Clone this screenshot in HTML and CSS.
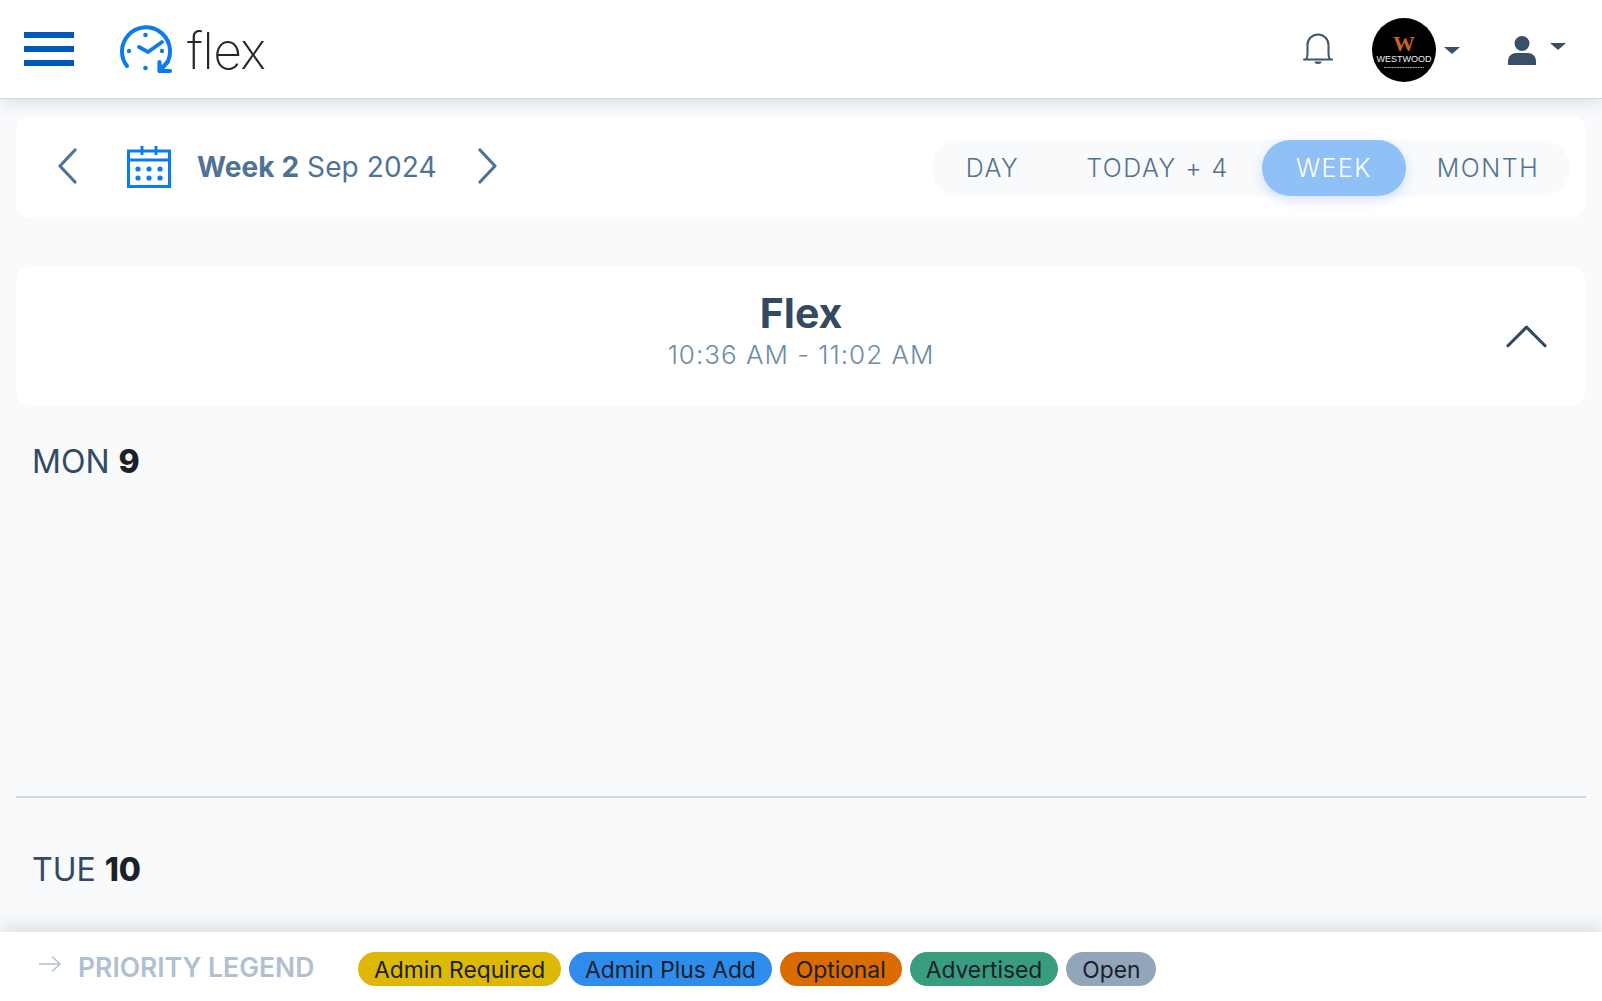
FILE: index.html
```html
<!DOCTYPE html>
<html lang="en">
<head>
<meta charset="utf-8">
<title>Flex</title>
<link rel="stylesheet" href="styles.css">
</head>
<body>
<div class="app">
  <header class="topbar">
    <button class="burger" aria-label="Menu"><span></span><span></span><span></span></button>
    <div class="brand">
      <svg class="brand-icon" viewBox="0 0 54 54" width="54" height="54">
        <path d="M7 41A24 24 0 1 1 48 36" fill="none" stroke="#0a7cf0" stroke-width="4" stroke-linecap="round"/>
        <path d="M39.500 37v9H50M39.500 46l8-9" fill="none" stroke="#0a7cf0" stroke-width="4.200" stroke-linecap="round" stroke-linejoin="round"/>
        <path d="M19 22l9 5 14-10" fill="none" stroke="#0a7cf0" stroke-width="3.800" stroke-linecap="round" stroke-linejoin="round"/>
        <circle cx="25.500" cy="10" r="2.300" fill="#0a7cf0"/>
        <circle cx="9" cy="26" r="2.200" fill="#0a7cf0"/>
        <circle cx="42" cy="26" r="2.200" fill="#0a7cf0"/>
        <circle cx="25.500" cy="43" r="2.300" fill="#0a7cf0"/>
      </svg>
      <span class="brand-name">flex</span>
    </div>
    <div class="top-actions">
      <svg class="bell" viewBox="0 0 32 32" width="32" height="32">
        <path d="M2 27.500h28M4 27.500c1.300-1.500 1.500-3 1.500-6V13a10.500 10.500 0 0 1 21 0v8.500c0 3 .2 4.500 1.500 6" fill="none" stroke="#3d5470" stroke-width="2" stroke-linecap="round"/>
        <path d="M12.500 29.500h7a3.500 2.500 0 0 1-7 0z" fill="#3d5470"/>
      </svg>
      <div class="menu avatar-menu">
        <svg class="avatar" viewBox="0 0 64 64" width="64" height="64">
          <circle cx="32" cy="32" r="32" fill="#000"/>
          <text class="avatar-w" x="32" y="33" text-anchor="middle">W</text>
          <text class="avatar-name" x="32" y="44" text-anchor="middle">WESTWOOD</text>
          <path d="M12 49.500h40" stroke="#aaa" stroke-width="1.200" stroke-dasharray="2 .6"/>
        </svg>
        <span class="caret"></span>
      </div>
      <div class="menu user-menu">
        <svg class="user" viewBox="0 0 28 29" width="28" height="29">
          <circle cx="14" cy="7.500" r="7.500" fill="#3a5068"/>
          <path d="M0 29v-4c0-5 4-8 8-8h12c4 0 8 3 8 8v4z" fill="#3a5068"/>
        </svg>
        <span class="caret"></span>
      </div>
    </div>
  </header>

  <main class="content">
    <section class="toolbar card">
      <div class="week-nav">
        <svg class="chev" viewBox="0 0 20 36" width="20" height="36"><path d="M18 2L3 18l15 16" fill="none" stroke="#4f7394" stroke-width="3.200" stroke-linecap="round" stroke-linejoin="round"/></svg>
        <svg class="cal" viewBox="0 0 44 42" width="44" height="42">
          <g fill="none" stroke="#0a7cf0" stroke-width="3">
            <path d="M1.500 5h41v35.500h-41z"/><path d="M1.500 14h41"/><path d="M15 0v9M29 0v9"/>
          </g>
          <g fill="#0a7cf0">
            <circle cx="11" cy="23" r="2.600"/><circle cx="22" cy="23" r="2.600"/><circle cx="33" cy="23" r="2.600"/>
            <circle cx="11" cy="32" r="2.600"/><circle cx="22" cy="32" r="2.600"/><circle cx="33" cy="32" r="2.600"/>
          </g>
        </svg>
        <div class="week-label"><strong>Week 2</strong> Sep 2024</div>
        <svg class="chev" viewBox="0 0 20 36" width="20" height="36"><path d="M2 2l15 16L2 34" fill="none" stroke="#4f7394" stroke-width="3.200" stroke-linecap="round" stroke-linejoin="round"/></svg>
      </div>
      <nav class="segments">
        <span class="seg seg-day">DAY</span>
        <span class="seg seg-today">TODAY + 4</span>
        <span class="seg seg-week">WEEK</span>
        <span class="seg seg-month">MONTH</span>
      </nav>
    </section>

    <section class="shift card">
      <div class="shift-text">
        <h1 class="shift-title">Flex</h1>
        <div class="shift-time">10:36 AM - 11:02 AM</div>
      </div>
      <svg class="shift-toggle" viewBox="0 0 42 24" width="42" height="24"><path d="M2 22L21 3l19 19" fill="none" stroke="#334a62" stroke-width="3.200" stroke-linecap="round" stroke-linejoin="round"/></svg>
    </section>

    <section class="day day-first">
      <h2 class="day-title">MON <b>9</b></h2>
    </section>
    <section class="day">
      <h2 class="day-title">TUE <b>10</b></h2>
    </section>
  </main>

  <footer class="legend">
    <svg class="legend-arrow" viewBox="0 0 24 18" width="24" height="18"><path d="M1 9h21M14 1.500L22 9l-8 7.500" fill="none" stroke="#b0c0d2" stroke-width="1.400"/></svg>
    <span class="legend-title">PRIORITY LEGEND</span>
    <div class="chips">
      <span class="chip chip-yellow">Admin Required</span>
      <span class="chip chip-blue">Admin Plus Add</span>
      <span class="chip chip-orange">Optional</span>
      <span class="chip chip-green">Advertised</span>
      <span class="chip chip-gray">Open</span>
    </div>
  </footer>
</div>
</body>
</html>
```
FILE: styles.css
```css
* { box-sizing: border-box; }
html, body { margin: 0; height: 100%; }
body {
  background: #f8fafc;
  font-family: "Inter", "Liberation Sans", sans-serif;
  overflow: hidden;
}
.app { height: 100vh; display: flex; flex-direction: column; }

.topbar {
  flex: 0 0 99px;
  background: #fff;
  border-bottom: 1px solid #cfd8e1;
  box-shadow: 0 4px 16px rgba(60, 75, 90, .14);
  display: flex;
  align-items: center;
  padding: 0 36px 0 24px;
  position: relative;
  z-index: 2;
}
.burger {
  width: 50px; height: 34px; padding: 0; border: 0; background: none;
  display: flex; flex-direction: column; justify-content: space-between;
}
.burger span { display: block; height: 6px; background: #0058bb; }
.brand { display: flex; align-items: center; margin-left: 46px; gap: 13px; margin-top: 6px; }
.brand-icon { display: block; }
.brand-name {
  font-size: 50px; font-weight: 200; color: #22282e; line-height: 54px;
  letter-spacing: -.5px; margin-top: -3px;
}
.top-actions { margin-left: auto; display: flex; align-items: center; }
.bell { margin: -3px 38px 0 0; }
.menu { display: flex; align-items: center; }
.avatar-menu { margin-top: 2px; }
.avatar { display: block; }
.avatar-w { font: 700 22px "Liberation Serif", serif; fill: #c9641b; }
.avatar-name { font: 9px "Liberation Sans", sans-serif; fill: #eee; }
.caret {
  width: 0; height: 0;
  border-left: 8px solid transparent; border-right: 8px solid transparent;
  border-top: 7.500px solid #3a5068;
}
.avatar-menu .caret { margin-left: 8px; }
.user-menu { margin-left: 48px; }
.user-menu .caret { margin-left: 14px; margin-top: -6px; }
.user-menu .user { margin-top: 2px; }

.content { flex: 1; min-height: 0; padding: 16px 16px 0; overflow: hidden; }
.card { background: #fff; border-radius: 16px; }
.toolbar {
  height: 104px; display: flex; align-items: center; justify-content: space-between;
  padding: 0 16px 0 41px;
}
.week-nav { display: flex; align-items: center; color: #4f7394; }
.chev { margin-top: -2px; }
.cal { margin-left: 50px; }
.week-label { margin: 0 37px 0 26px; font-size: 28px; font-weight: 400; letter-spacing: .1px; white-space: nowrap; width: 244px; }
.week-label strong { font-weight: 700; }
.segments {
  height: 56px; width: 638px; background: #f8fafc; border-radius: 28px;
  display: grid; grid-template-columns: 121px 209px 144px 164px; margin-top: 2px;
}
.seg {
  display: flex; align-items: center; justify-content: center;
  font-size: 25px; letter-spacing: 1.500px; color: #53728f; font-weight: 350; border-radius: 28px;
}
.seg-week { background: #90c1f6; color: #fff; box-shadow: 0 4px 12px rgba(100, 150, 230, .28); }

.shift {
  margin-top: 47px; height: 140px; display: flex; align-items: center; justify-content: center;
  position: relative;
}
.shift-text { text-align: center; margin-top: -9px; }
.shift-title { margin: 0; font-size: 41px; font-weight: 700; line-height: 47px; color: #334a62; }
.shift-time { font-size: 26px; font-weight: 300; line-height: 36px; color: #6f8aa5; letter-spacing: 1px; }
.shift-toggle { position: absolute; right: 39px; top: 58px; width: 41px; }

.day { height: 408px; padding: 36px 16px 0; border-bottom: 2px solid #cfd8e1; }
.day-first { height: 392px; }
.day + .day { border-bottom: 0; padding-top: 52px; }
.day-title { margin: 0; font-size: 32px; font-weight: 400; line-height: 40px; color: #334a62; }
.day-title b { font-weight: 800; color: #1a2128; }

.legend {
  flex: 0 0 69px; background: #fff; display: flex; align-items: center; padding: 0 0 0 38px;
  box-shadow: 0 -6px 16px rgba(60, 75, 90, .14);
  position: relative; z-index: 2;
}
.legend-arrow { margin-top: -6px; }
.legend-title { margin-left: 16px; width: 280px; font-size: 26.500px; font-weight: 600; color: #b0c0d2; }
.chips { display: flex; gap: 8px; margin-top: 5px; }
.chip {
  height: 34px; border-radius: 17px; padding: 0 16px; display: flex; align-items: center;
  font-size: 22.800px; color: #1a202c; white-space: nowrap;
}
.chip-yellow { background: #ddb806; }
.chip-blue { background: #2e8ceb; }
.chip-orange { background: #d96b00; }
.chip-green { background: #379d7e; }
.chip-gray { background: #92a6bb; }
```
